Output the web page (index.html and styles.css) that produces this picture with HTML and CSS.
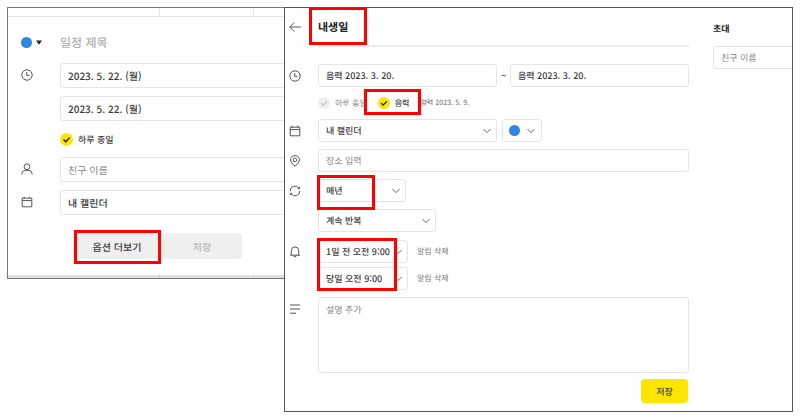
FILE: index.html
```html
<!DOCTYPE html>
<html lang="ko">
<head>
<meta charset="utf-8">
<title>내생일</title>
<link rel="stylesheet" href="styles.css">
</head>
<body>
<svg class="defs" aria-hidden="true">
  <symbol id="clock" viewBox="0 0 12 12"><circle cx="6" cy="6" r="5.2"/><path d="M5.7 3v3.4h2.8"/></symbol>
  <symbol id="calendar" viewBox="0 0 12 12"><path d="M1.2 2.2h9.6v8.6H1.2zM1.2 4.6h9.6M3.2 .7v1.6M8.8 .7v1.6"/></symbol>
  <symbol id="check" viewBox="0 0 12 12"><path d="M3.2 6.1l2 1.9 3.7-3.6"/></symbol>
  <symbol id="chevron" viewBox="0 0 8 6"><path d="M.5 1L4 4.600l3.500-3.600"/></symbol>
</svg>
<main class="page">
  <section class="quick" aria-label="일정 간편 등록">
    <div class="strip strip-top"><span></span><span></span><span></span></div>
    <form class="quick-form">
      <div class="row title-row">
        <button type="button" class="color-pick" aria-label="색상 선택"><i class="dot"></i><svg class="caret" viewBox="0 0 6 5"><path d="M0 .4h6L3 4.800z"/></svg></button>
        <input class="title-input" type="text" placeholder="일정 제목" aria-label="일정 제목">
      </div>
      <div class="row">
        <svg class="icon"><use href="#clock"/></svg>
        <div class="stack">
          <input class="field" type="text" value="2023. 5. 22. (월)" aria-label="시작일">
          <input class="field" type="text" value="2023. 5. 22. (월)" aria-label="종료일">
        </div>
      </div>
      <div class="checks">
        <label class="check"><span class="tick"><input type="checkbox" checked><svg><use href="#check"/></svg></span>하루 종일</label>
      </div>
      <div class="row">
        <svg class="icon" viewBox="0 0 12 12"><circle cx="6" cy="3.800" r="2.900"/><path d="M1 11.500V10.200Q1 7.600 4.300 7.400h3.400Q11 7.600 11 10.200v1.300"/></svg>
        <input class="field" type="text" placeholder="친구 이름" aria-label="친구 이름">
      </div>
      <div class="row last">
        <svg class="icon"><use href="#calendar"/></svg>
        <select class="field" aria-label="캘린더"><option>내 캘린더</option></select>
      </div>
      <div class="actions">
        <span class="marked mark-option"><button type="button" class="btn more">옵션 더보기</button></span>
        <button type="submit" class="btn" disabled>저장</button>
      </div>
    </form>
    <div class="strip strip-bottom"><span></span><span></span><span></span></div>
  </section>

  <section class="detail" aria-label="일정 상세">
    <form class="editor">
      <header class="row head">
        <button type="button" class="back" aria-label="뒤로"><svg class="icon" viewBox="0 0 12 12"><path d="M5.300 1.500L.8 6l4.500 4.500M.8 6h11"/></svg></button>
        <div class="head-title"><h1 class="marked mark-title">내생일</h1></div>
      </header>
      <div class="row">
        <svg class="icon"><use href="#clock"/></svg>
        <div class="range">
          <input class="field" type="text" value="음력 2023. 3. 20." aria-label="시작일">
          <span class="tilde">~</span>
          <input class="field" type="text" value="음력 2023. 3. 20." aria-label="종료일">
        </div>
      </div>
      <div class="checks">
        <label class="check off"><span class="tick"><input type="checkbox"><svg><use href="#check"/></svg></span>하루 종일</label>
        <label class="check marked mark-lunar"><span class="tick"><input type="checkbox" checked><svg><use href="#check"/></svg></span>음력</label>
        <span class="solar">양력 2023. 5. 9.</span>
      </div>
      <div class="row">
        <svg class="icon"><use href="#calendar"/></svg>
        <div class="range">
          <span class="drop"><select class="field" aria-label="캘린더"><option>내 캘린더</option></select><svg class="chev"><use href="#chevron"/></svg></span>
          <span class="cal-color"><button type="button" class="field color-drop" aria-label="색상 선택"><i class="dot"></i><svg class="chev"><use href="#chevron"/></svg></button></span>
        </div>
      </div>
      <div class="row">
        <svg class="icon" viewBox="0 0 12 12"><path d="M6 11.400Q1.500 7.600 1.500 4.900a4.500 4.300 0 0 1 9 0Q10.500 7.600 6 11.400z"/><circle cx="6" cy="4.800" r="1.800"/></svg>
        <input class="field" type="text" placeholder="장소 입력" aria-label="장소">
      </div>
      <div class="row">
        <svg class="icon" viewBox="0 0 12 12"><path d="M1.100 6.200A4.900 4.900 0 0 1 10 3.200M10.900 5.800A4.900 4.900 0 0 1 2 8.800M10.500 2v1.700H8.800M1.500 10V8.300h1.700"/></svg>
        <div class="stack">
          <span class="drop w-repeat marked mark-repeat"><select class="field" aria-label="반복"><option>매년</option></select><svg class="chev"><use href="#chevron"/></svg></span>
          <span class="drop w-until"><select class="field" aria-label="반복 종료"><option>계속 반복</option></select><svg class="chev"><use href="#chevron"/></svg></span>
        </div>
      </div>
      <div class="row alarm-row">
        <svg class="icon" viewBox="0 0 12 12"><path d="M1 9.200h10M2.300 9.200V4.800a3.700 3.900 0 0 1 7.400 0v4.400M4.700 9.400a1.300 1.500 0 0 0 2.600 0"/></svg>
        <div class="alarms marked mark-alarms">
          <div class="alarm"><span class="drop w-alarm"><select class="field" aria-label="알림 1"><option>1일 전 오전 9:00</option></select><svg class="chev"><use href="#chevron"/></svg></span><button type="button" class="remove">알림 삭제</button></div>
          <div class="alarm"><span class="drop w-alarm"><select class="field" aria-label="알림 2"><option>당일 오전 9:00</option></select><svg class="chev"><use href="#chevron"/></svg></span><button type="button" class="remove">알림 삭제</button></div>
        </div>
      </div>
      <div class="row memo-row">
        <svg class="icon" viewBox="0 0 12 12"><path d="M1 2h10M1 6h10M1 10.200h6"/></svg>
        <textarea class="field memo" placeholder="설명 추가" aria-label="설명"></textarea>
      </div>
      <div class="submit"><button type="submit" class="btn primary">저장</button></div>
    </form>
    <aside class="invite">
      <label for="invitee">초대</label>
      <input id="invitee" class="field" type="text" placeholder="친구 이름">
    </aside>
  </section>
</main>
</body>
</html>
```
FILE: styles.css
```css
*, *::after { box-sizing: border-box; }

body {
  margin: 0;
  padding: 7px;
  background: #fff;
  color: #3a3a3a;
  font-family: "Noto Sans CJK KR", "Noto Sans", sans-serif;
  font-size: 9px;
  font-weight: 500;
  text-rendering: geometricPrecision;
}

.defs { position: absolute; width: 0; height: 0; }

.page {
  display: grid;
  grid-template-columns: 277px minmax(0, 1fr);
  align-items: start;
}

input, select, textarea, button {
  margin: 0;
  font: inherit;
  color: inherit;
  text-rendering: inherit;
}

button { border: 0; padding: 0; background: none; }

svg {
  fill: none;
  stroke: #555;
  stroke-width: 1;
}

.icon { width: 12px; height: 12px; }
.chev { width: 8px; height: 6px; stroke: #666; }

/* Form parts */
.field {
  appearance: none;
  display: block;
  width: 100%;
  height: var(--field);
  padding: 0 7px;
  border: 1px solid #e4e4e4;
  border-radius: 3px;
  background: #fff;
  outline: 0;
}

::placeholder { color: #888; opacity: 1; font-weight: 400; }

.row {
  display: grid;
  grid-template-columns: var(--gutter) minmax(0, 1fr);
  margin-bottom: var(--gap);
}

.row > .icon { margin-top: 6px; }

.stack { display: grid; gap: var(--gap); }

.checks {
  display: flex;
  align-items: center;
  gap: 11px;
  padding-left: var(--gutter);
  margin-top: calc(0px - var(--gap));
}

.check { display: flex; align-items: center; gap: 5px; }
.tick { display: grid; }
.tick > * { grid-area: 1 / 1; width: var(--tick); height: var(--tick); }
.tick input { appearance: none; border-radius: 50%; background: #eee; }
.tick input:checked { background: #fee500; }
.tick svg { z-index: 1; pointer-events: none; stroke: #c4c4c4; stroke-width: 1.3; }
.tick input:checked + svg { stroke: #222; }
.off { color: #888; font-weight: 400; }

.dot { width: 11px; height: 11px; border-radius: 50%; background: #2f86de; }

.btn {
  height: 26px;
  border-radius: 4px;
  background: #efefef;
}
.btn:disabled { color: #b8b8b8; }

/* Red highlight frames */
.marked { position: relative; }
.marked::after {
  content: "";
  position: absolute;
  z-index: 2;
  border: 3px solid #f00;
  pointer-events: none;
}
.mark-option::after { inset: -3px -3px -5px -2px; }
.mark-title::after { inset: -1px -19px 0 -9px; }
.mark-lunar::after { inset: -8px -12px -6px -14px; }
.mark-repeat::after { inset: -4px 31px -8px -1px; }
.mark-alarms::after { inset: -2px auto -1px -1px; width: 80px; }

/* Quick form */
.quick {
  --field: 25px;
  --gutter: 39px;
  --gap: 8px;
  --tick: 13px;
  overflow: hidden;
  border: 1px solid #777;
  border-right: 0;
}

.strip { display: grid; grid-template-columns: 152px 94px 1fr; }
.strip span { border-right: 1px solid #e4e4e4; }
.strip span:last-child { border-right: 0; }
.strip-top { height: 9px; border-bottom: 1px solid #e4e4e4; }
.strip-bottom { height: 3px; background: #e2e2e2; }
.strip-bottom span { border-color: #ccc; }

.quick-form { padding: 15px 0 16px 13px; font-size: 10px; }
.quick .field { width: calc(100% + 8px); }
.title-row { align-items: center; margin-bottom: 11px; }
.color-pick { display: flex; align-items: center; gap: 4px; }
.caret { width: 6px; height: 5px; fill: #222; stroke: none; }
.title-input {
  width: 100%;
  height: 20px;
  padding: 0;
  border: 0;
  outline: 0;
  font-size: 12px;
}
.title-input::placeholder { color: #b0b0b0; font-weight: 500; }
.quick .checks { height: 36px; font-size: 9px; }
.last { margin-bottom: 18px; }
.actions { display: flex; gap: 4px; padding-left: 55px; }
.actions .btn { width: 80px; }
.actions .more { width: 82px; }
.mark-option { display: flex; }

/* Detail form */
.detail {
  --field: 23px;
  --gutter: 28px;
  --gap: 7px;
  --tick: 12px;
  display: grid;
  grid-template-columns: minmax(0, 1fr) 79px;
  gap: 24px;
  overflow: hidden;
  border: 1px solid #555;
  background: #fff;
}

.editor { padding: 0 0 8px 4px; }
.editor .row, .editor .checks { --gutter: 29px; }
.head { margin-bottom: 17px; }
.back { display: flex; align-items: center; padding-bottom: 2px; }
.head-title { display: flex; border-bottom: 2px solid #ebebeb; }
h1 { margin: 0; padding-top: 2px; font-size: 11px; font-weight: 700; line-height: 35px; color: #222; }

.range {
  display: grid;
  grid-template-columns: minmax(0, 1fr) 13px minmax(0, 1fr);
  align-items: center;
}
.tilde { text-align: center; }
.detail .checks { height: 32px; font-size: 8px; }
.solar { color: #888; font-size: 7px; }

.drop { display: grid; align-items: center; }
.drop > * { grid-area: 1 / 1; }
.drop .chev { z-index: 1; justify-self: end; margin-right: 6px; pointer-events: none; }
.cal-color { grid-column: 2 / -1; padding-left: 5px; }
.color-drop { display: flex; align-items: center; justify-content: space-between; width: 40px; padding: 0 6px; }

.w-repeat { width: 88px; }
.w-until { width: 118px; }
.w-alarm { width: 90px; }
.row.alarm-row { margin-top: 8px; }
.alarms { display: grid; gap: 4px; }
.alarm { display: flex; align-items: center; gap: 9px; }
.remove { color: #777; font-size: 8px; font-weight: 400; }

.memo-row { margin-bottom: 6px; }
.memo { height: 76px; padding: 5px 7px; line-height: 13px; resize: none; }
.submit { display: flex; justify-content: flex-end; padding-right: 1px; }
.primary { width: 47px; height: 24px; background: #fee500; }

.invite label {
  display: block;
  padding: 14px 0 11px;
  font-weight: 700;
  line-height: 13px;
  color: #222;
}
.invite .field { width: calc(100% + 4px); }
```
